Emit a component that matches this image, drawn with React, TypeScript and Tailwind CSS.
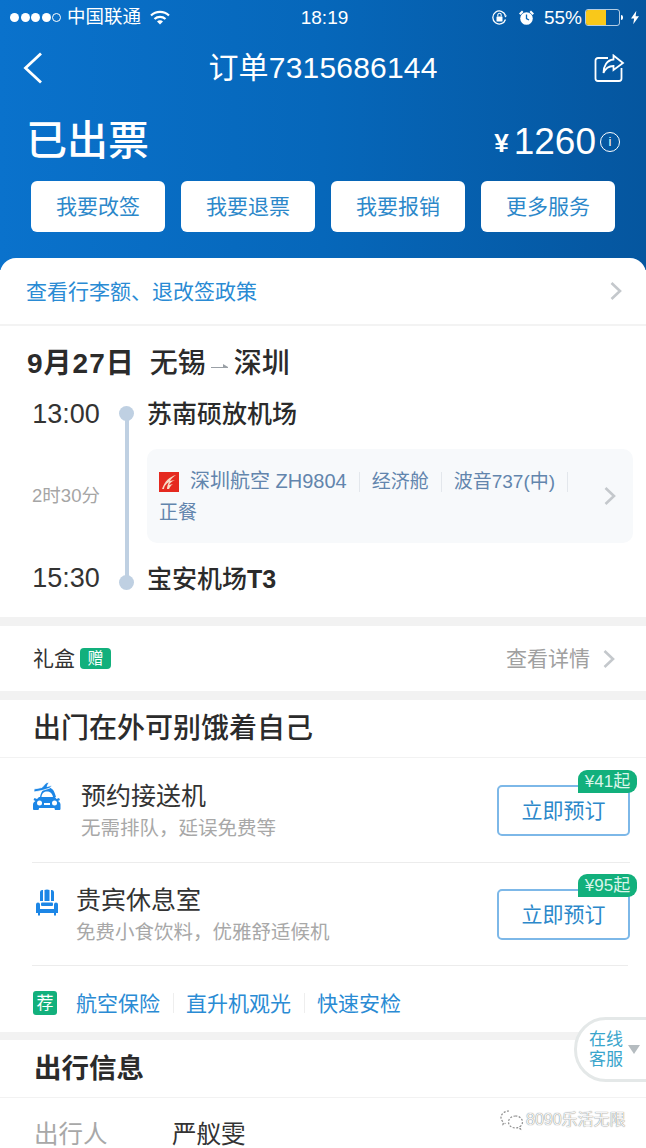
import React from 'react';

const Chevron = ({ className = '' }: { className?: string }) => (
  <svg className={className} width="14" height="20" viewBox="0 0 14 20" fill="none">
    <path d="M2.5 2l8.5 8-8.5 8" stroke="#c4c8cc" strokeWidth="2.6" />
  </svg>
);

const StatusBar = () => (
  <div className="flex h-[34px] items-center justify-between pl-[10px] pr-[7px] text-white">
    <div className="flex w-[220px] items-center">
      {[0, 1, 2, 3].map((i) => (
        <span key={i} className="mr-[1.5px] h-[9px] w-[9px] rounded-full bg-white" />
      ))}
      <span className="h-[9px] w-[9px] rounded-full border border-white" />
      <span className="ml-[6px] text-[18.5px] leading-none">中国联通</span>
      <svg className="ml-[9px]" width="20" height="15" viewBox="0 0 20 15" fill="none" stroke="white" strokeWidth="2.2">
        <path d="M1 5.500a13 13 0 0 1 18 0" />
        <path d="M4.500 9a8 8 0 0 1 11 0" />
        <path d="M10 14.500l-3-3a4.200 4.200 0 0 1 6 0z" fill="white" stroke="none" />
      </svg>
    </div>
    <span className="text-[19px] leading-none">18:19</span>
    <div className="flex w-[220px] items-center justify-end">
      <svg width="17" height="17" viewBox="0 0 17 17" fill="none" stroke="white">
        <path d="M14.500 10.500a6.500 6.500 0 1 1 0-4" strokeWidth="1.3" />
        <path d="M13 6.500h3l-1.500 2z" fill="white" stroke="none" />
        <rect x="5.500" y="7.500" width="6" height="5" rx="0.5" fill="white" stroke="none" />
        <path d="M6.800 7.500V6a1.700 1.700 0 0 1 3.400 0v1.500" strokeWidth="1.1" />
      </svg>
      <svg className="ml-[10px]" width="17" height="17" viewBox="0 0 17 17" fill="white">
        <circle cx="8.500" cy="9.500" r="6.300" />
        <path d="M1 4.500L4 1.500l1.500 1.500-3 3zM16 4.500L13 1.500l-1.500 1.500 3 3z" />
        <path d="M8.500 5.500v4.200l2.500 1.300" stroke="#0667ba" strokeWidth="1.3" fill="none" />
      </svg>
      <span className="ml-[9px] text-[19px] leading-none">55%</span>
      <div className="ml-[3px] flex h-[17px] w-[35px] rounded-[3px] border border-white/70">
        <div className="h-full w-[20px] rounded-l-[2px] bg-[#f9c81a]" />
      </div>
      <span className="ml-[1px] h-[5px] w-[2px] rounded-r-sm bg-white" />
      <svg className="ml-[8px]" width="8" height="15" viewBox="0 0 9 15" fill="white">
        <path d="M6 0L0 8.500h3.500L2.500 15 9 6H5.200z" />
      </svg>
    </div>
  </div>
);

const Header = () => (
  <div className="h-[270px] bg-gradient-to-r from-[#0a72cc] via-[#0667ba] to-[#05569f] text-white">
    <StatusBar />
    <div className="flex h-[68px] items-center justify-between pl-[23px] pr-[21px]">
      <svg width="20" height="32" viewBox="0 0 20 32" fill="none">
        <path d="M18 1.500L2.500 16 18 30.500" stroke="white" strokeWidth="2.8" />
      </svg>
      <span className="ml-[9px] text-[30px] leading-none tracking-[0.2px]">订单7315686144</span>
      <svg width="31" height="29" viewBox="0 0 31 29" fill="none" stroke="white" strokeWidth="1.8">
        <path d="M14 4H4a2.500 2.500 0 0 0-2.500 2.500v18A2.500 2.500 0 0 0 4 27h21a2.500 2.500 0 0 0 2.500-2.500V14" />
        <path d="M19.500 1.500l9.500 7.500-9.500 7v-4c-5 0-8 2-10 7 0-7 3.500-13 10-13.500z" />
      </svg>
    </div>
    <div className="flex h-[79px] items-center justify-between pl-[26px] pr-[26px]">
      <span className="text-[41px] font-medium leading-none">已出票</span>
      <div className="flex items-center">
        <span className="mr-[5px] mt-[3px] text-[26px] font-bold leading-none">¥</span>
        <span className="text-[37px] font-medium leading-none">1260</span>
        <span className="ml-[4px] flex h-[20px] w-[20px] items-center justify-center rounded-full border border-white text-[13px] leading-none">
          i
        </span>
      </div>
    </div>
    <div className="flex gap-[16px] pl-[31px]">
      {['我要改签', '我要退票', '我要报销', '更多服务'].map((label) => (
        <button
          key={label}
          className="h-[51px] w-[134px] rounded-[6px] bg-white text-[21px] leading-none text-[#2c88ca]"
        >
          {label}
        </button>
      ))}
    </div>
  </div>
);

const Flight = () => (
  <div className="h-[293px] border-t-2 border-[#f3f3f3] pl-[27px]">
    <div className="flex h-[72px] items-center pt-[3px] text-[28px] font-medium leading-none text-[#2b2b2b]">
      <span className="font-bold tracking-[1px]">9月27日</span>
      <span className="ml-[15px]">无锡</span>
      <svg className="mx-[3px] mt-[4px]" width="22" height="8" viewBox="0 0 18 8" fill="#9aa0a6">
        <path d="M0 5h12V2l5 3v1H0z" />
      </svg>
      <span>深圳</span>
    </div>
    <div className="flex">
      <div className="flex w-[78px] flex-col items-center text-[#333]">
        <span className="h-[32px] text-[27px] leading-[32px]">13:00</span>
        <span className="mt-[54px] h-[24px] text-[18.5px] leading-[24px] text-[#a5a5a5]">2时30分</span>
        <span className="mt-[54px] h-[32px] text-[27px] leading-[32px]">15:30</span>
      </div>
      <div className="relative ml-[14px] w-[15px]">
        <div className="absolute left-[5.5px] top-[15px] h-[165px] w-[4px] bg-[#bfd0e2]" />
        <div className="absolute left-0 top-[8px] h-[15px] w-[15px] rounded-full bg-[#bfd0e2]" />
        <div className="absolute left-0 top-[177px] h-[15px] w-[15px] rounded-full bg-[#bfd0e2]" />
      </div>
      <div className="ml-[13px] flex flex-col">
        <span className="h-[32px] text-[25px] font-medium leading-[32px] text-[#2b2b2b]">苏南硕放机场</span>
        <div className="mt-[19px] flex h-[94px] w-[486px] items-center justify-between rounded-[10px] bg-[#f7f9fb] pl-[12px] pr-[16px]">
          <div className="pt-[2px] text-[19px] leading-[31px] text-[#6285ad]">
            <div className="flex items-center">
              <svg width="20" height="20" viewBox="0 0 20 20">
                <rect width="20" height="20" fill="#e5291f" />
                <path d="M3 17C6 9 10 5 17 3c-3 2-5 4-6 6l5-1c-3 1-5 3-6 5l4-1c-2 1-3 3-4 5H8c0-3 1-5 2-7-3 2-5 4-5 7z" fill="#f7d9c4" />
              </svg>
              <span className="ml-[11px] text-[20px]">深圳航空 ZH9804</span>
              <span className="mx-[12px] h-[20px] w-px bg-[#e3e7ec]" />
              <span>经济舱</span>
              <span className="mx-[12px] h-[20px] w-px bg-[#e3e7ec]" />
              <span>波音737(中)</span>
              <span className="mx-[12px] h-[20px] w-px bg-[#e3e7ec]" />
            </div>
            <div>正餐</div>
          </div>
          <Chevron />
        </div>
        <span className="mt-[19px] h-[34px] text-[25px] font-medium leading-[34px] text-[#2b2b2b]">
          宝安机场<span className="font-bold">T3</span>
        </span>
      </div>
    </div>
  </div>
);

const ServiceRow = ({
  icon,
  title,
  sub,
  price,
  iconClass,
  height,
}: {
  icon: React.ReactNode;
  title: string;
  sub: string;
  price: string;
  iconClass: string;
  height: string;
}) => (
  <div className={`relative flex items-center justify-between ${height}`}>
    <div className="flex items-start">
      <div className={`flex ${iconClass}`}>{icon}</div>
      <div>
        <div className="text-[25px] leading-[36px] text-[#333]">{title}</div>
        <div className="text-[19.5px] leading-[28px] text-[#a8a8a8]">{sub}</div>
      </div>
    </div>
    <div className="relative flex h-[51px] w-[133px] items-center justify-center rounded-[5px] border-2 border-[#7db8e8] text-[21px] leading-none text-[#2c88ca]">
      立即预订
      <span className="absolute -right-[9px] -top-[17px] flex h-[23px] w-[59px] items-center justify-center rounded-tl-[9px] rounded-r-[9px] bg-[#12b07c] text-[17px] leading-none text-[#d9f5ea]">
        {price}
      </span>
    </div>
  </div>
);

const CarIcon = () => (
  <svg width="28" height="28" viewBox="0 0 28 28" fill="#1c86e6">
    <path d="M7 15c1-5 3-8 7-9 4-1 7 1 9 9h-3c-1-4-3-5.500-6-5.500S9 11 8.500 15z" />
    <path d="M1 7l8-1.500L13 1l3-1-2 4.500 5-1-2 2.500-8 2.500-8 1.500z" stroke="white" strokeWidth="0.8" />
    <path d="M6 15h16l1.500 2 2.500-1 1 2-2 1c1.500 1 2.500 2 2.500 3.500v4.500c0 .5-.5 1-1 1h-4c-.5 0-1-.5-1-2H6c0 1.500-.5 2-1 2H1c-.5 0-1-.5-1-1v-4.500C0 21 1 20 2.500 19l-2-1 1-2 2.500 1z" />
    <circle cx="6.500" cy="21" r="2.500" fill="white" />
    <circle cx="21.500" cy="21" r="2.500" fill="white" />
    <rect x="11" y="21" width="6" height="2" fill="white" />
  </svg>
);

const SeatIcon = () => (
  <svg width="22" height="27" viewBox="0 0 22 27" fill="#1c86e6">
    <path d="M4 3a2.500 2.500 0 0 1 3-2v11H4zM8.500 1a6 6 0 0 1 5 0v11h-5zM15 1a2.500 2.500 0 0 1 3 2v9h-3z" />
    <rect x="5" y="13.500" width="12" height="3.500" rx="1" />
    <path d="M0 15.500a2 2 0 0 1 4 0V20h14v-4.500a2 2 0 0 1 4 0V24h-2v2.500h-2V24H4v2.500H2V24H0z" />
  </svg>
);

const WatermarkIcon = () => (
  <svg width="24" height="22" viewBox="0 0 24 22" fill="none" stroke="#8d8d8d" strokeWidth="1.2" strokeDasharray="2 1.5">
    <path d="M9 2C4.500 2 1 5 1 8.500c0 2 1 3.500 2.500 4.700L3 15.500l2.500-1.300" />
    <path d="M15.500 7c-3.800 0-7 2.600-7 6s3.200 6 7 6c1 0 1.800-.2 2.500-.4l2.500 1.400-.6-2.200c1.500-1.100 2.600-2.900 2.600-4.800 0-3.400-3.200-6-7-6z" />
  </svg>
);

export default function App() {
  return (
    <div className="relative h-[1148px] w-[646px] overflow-hidden bg-white font-['Liberation_Sans','Noto_Sans_CJK_SC',sans-serif]">
      <Header />
      <div className="relative -mt-[12px] rounded-t-[16px] bg-white">
        <div className="flex h-[66px] items-center justify-between pl-[26px] pr-[23px] text-[21px] leading-none text-[#2a8bd4]">
          查看行李额、退改签政策
          <Chevron />
        </div>
        <Flight />
        <div className="flex h-[83px] items-center justify-between border-y-[9px] border-[#f2f2f2] pl-[33px] pr-[30px]">
          <div className="flex items-center">
            <span className="text-[21px] leading-none text-[#333]">礼盒</span>
            <span className="ml-[5px] flex h-[21px] w-[31px] items-center justify-center rounded-[4px] bg-[#12b07c] text-[16px] leading-none text-white">
              赠
            </span>
          </div>
          <div className="flex items-center text-[21px] leading-none text-[#a0a0a0]">
            查看详情
            <Chevron className="ml-[12px]" />
          </div>
        </div>
        <div className="flex h-[58px] items-center border-b border-[#f2f2f2] pl-[33px] text-[28px] font-medium leading-none text-[#2b2b2b]">
          出门在外可别饿着自己
        </div>
        <div className="pl-[32px] pr-[16px]">
          <div className="divide-y divide-[#ececec]">
            <ServiceRow
              icon={<CarIcon />}
              title="预约接送机"
              sub="无需排队，延误免费等"
              price="¥41起"
              iconClass="w-[49px] pl-[1px] pt-[4px]"
              height="h-[105px]"
            />
            <ServiceRow
              icon={<SeatIcon />}
              title="贵宾休息室"
              sub="免费小食饮料，优雅舒适候机"
              price="¥95起"
              iconClass="w-[44px] pl-[4px] pt-[7px]"
              height="h-[102px]"
            />
          </div>
        </div>
        <div className="ml-[32px] mr-[18px] flex h-[67px] items-center border-t border-[#ececec] pl-[1px] pt-[8px] text-[21px] leading-none text-[#2a8bd4]">
          <span className="mr-[19px] flex h-[24px] w-[24px] items-center justify-center rounded-[3px] bg-[#12b07c] text-[17px] leading-none text-white">
            荐
          </span>
          航空保险
          <span className="ml-[13px] mr-[12px] h-[20px] w-px bg-[#eeeeee]" />
          直升机观光
          <span className="ml-[13px] mr-[12px] h-[20px] w-px bg-[#eeeeee]" />
          快速安检
        </div>
        <div className="flex h-[65px] items-center border-t-[8px] border-[#f2f2f2] pl-[34px] text-[27.5px] font-bold leading-none text-[#2b2b2b]">
          出行信息
        </div>
        <div className="flex h-[72px] items-center border-t border-[#f2f2f2] pl-[34px] pt-[3px] text-[24.5px] leading-none">
          <span className="w-[138px] text-[#a8a8a8]">出行人</span>
          <span className="text-[#333]">严舣雯</span>
        </div>
      </div>
      {/* floating support tab */}
      <div className="absolute left-[574px] top-[1017px] flex h-[65px] w-[80px] items-center rounded-l-[32px] border-[3px] border-[#e4e8e8] bg-white pl-[12px]">
        <span className="w-[36px] text-[17px] leading-[20px] text-[#3aa5cc]">在线客服</span>
        <span className="ml-[3px] h-0 w-0 border-x-[6px] border-t-[9px] border-x-transparent border-t-[#b5bcc0]" />
      </div>
      {/* watermark */}
      <div className="absolute left-[500px] top-[1109px] flex items-center text-[#f4f4f4] [text-shadow:0_0_1px_#555]">
        <WatermarkIcon />
        <span className="ml-[2px] text-[16px] leading-none">8090乐活无限</span>
      </div>
    </div>
  );
}
